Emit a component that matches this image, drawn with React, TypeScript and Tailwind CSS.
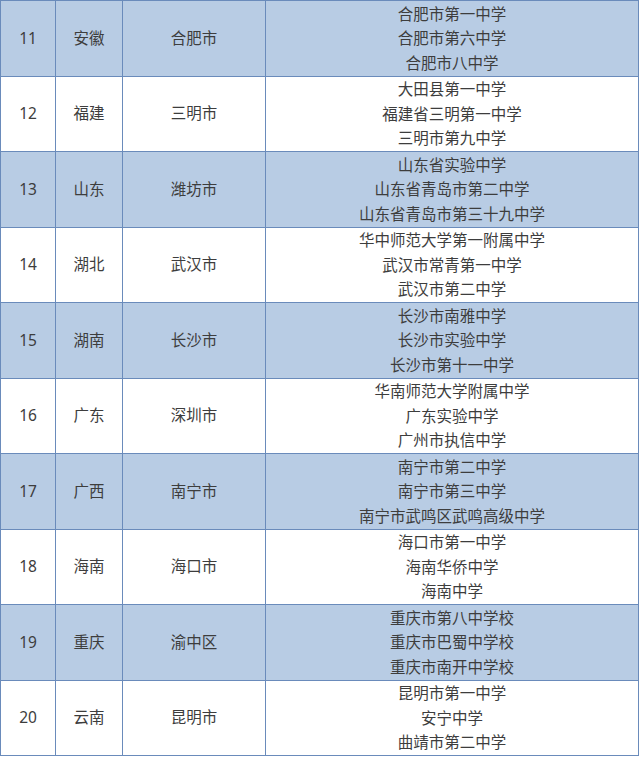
import React from 'react';

interface Row {
    no: number;
    province: string;
    city: string;
    schools: string[];
}

const rows: Row[] = [
    { no: 11, province: '安徽', city: '合肥市', schools: ['合肥市第一中学', '合肥市第六中学', '合肥市八中学'] },
    { no: 12, province: '福建', city: '三明市', schools: ['大田县第一中学', '福建省三明第一中学', '三明市第九中学'] },
    { no: 13, province: '山东', city: '潍坊市', schools: ['山东省实验中学', '山东省青岛市第二中学', '山东省青岛市第三十九中学'] },
    { no: 14, province: '湖北', city: '武汉市', schools: ['华中师范大学第一附属中学', '武汉市常青第一中学', '武汉市第二中学'] },
    { no: 15, province: '湖南', city: '长沙市', schools: ['长沙市南雅中学', '长沙市实验中学', '长沙市第十一中学'] },
    { no: 16, province: '广东', city: '深圳市', schools: ['华南师范大学附属中学', '广东实验中学', '广州市执信中学'] },
    { no: 17, province: '广西', city: '南宁市', schools: ['南宁市第二中学', '南宁市第三中学', '南宁市武鸣区武鸣高级中学'] },
    { no: 18, province: '海南', city: '海口市', schools: ['海口市第一中学', '海南华侨中学', '海南中学'] },
    { no: 19, province: '重庆', city: '渝中区', schools: ['重庆市第八中学校', '重庆市巴蜀中学校', '重庆市南开中学校'] },
    { no: 20, province: '云南', city: '昆明市', schools: ['昆明市第一中学', '安宁中学', '曲靖市第二中学'] },
];

export default function App() {
    return (
        <div className="w-[640px] h-[757px] bg-white overflow-hidden">
            <table
                className="w-[639px] border-collapse text-[15.5px] text-[#3d3d3d] text-center"
                style={{ fontFamily: '"Noto Sans", "Noto Sans CJK SC", sans-serif' }}
            >
                <colgroup>
                    <col className="w-[55px]" />
                    <col className="w-[67px]" />
                    <col className="w-[143px]" />
                    <col />
                </colgroup>
                <tbody>
                    {rows.map((r, i) => (
                        <tr
                            key={r.no}
                            className={`h-[75.5px] ${i % 2 === 0 ? 'bg-[#b8cce4]' : 'bg-white'}`}
                        >
                            <td className="border border-[#6a8bbb] p-0">{r.no}</td>
                            <td className="border border-[#6a8bbb] p-0">{r.province}</td>
                            <td className="border border-[#6a8bbb] p-0">{r.city}</td>
                            <td className="border border-[#6a8bbb] p-0 leading-[24.5px]">
                                {r.schools.map((s) => (
                                    <div key={s}>{s}</div>
                                ))}
                            </td>
                        </tr>
                    ))}
                </tbody>
            </table>
        </div>
    );
}
